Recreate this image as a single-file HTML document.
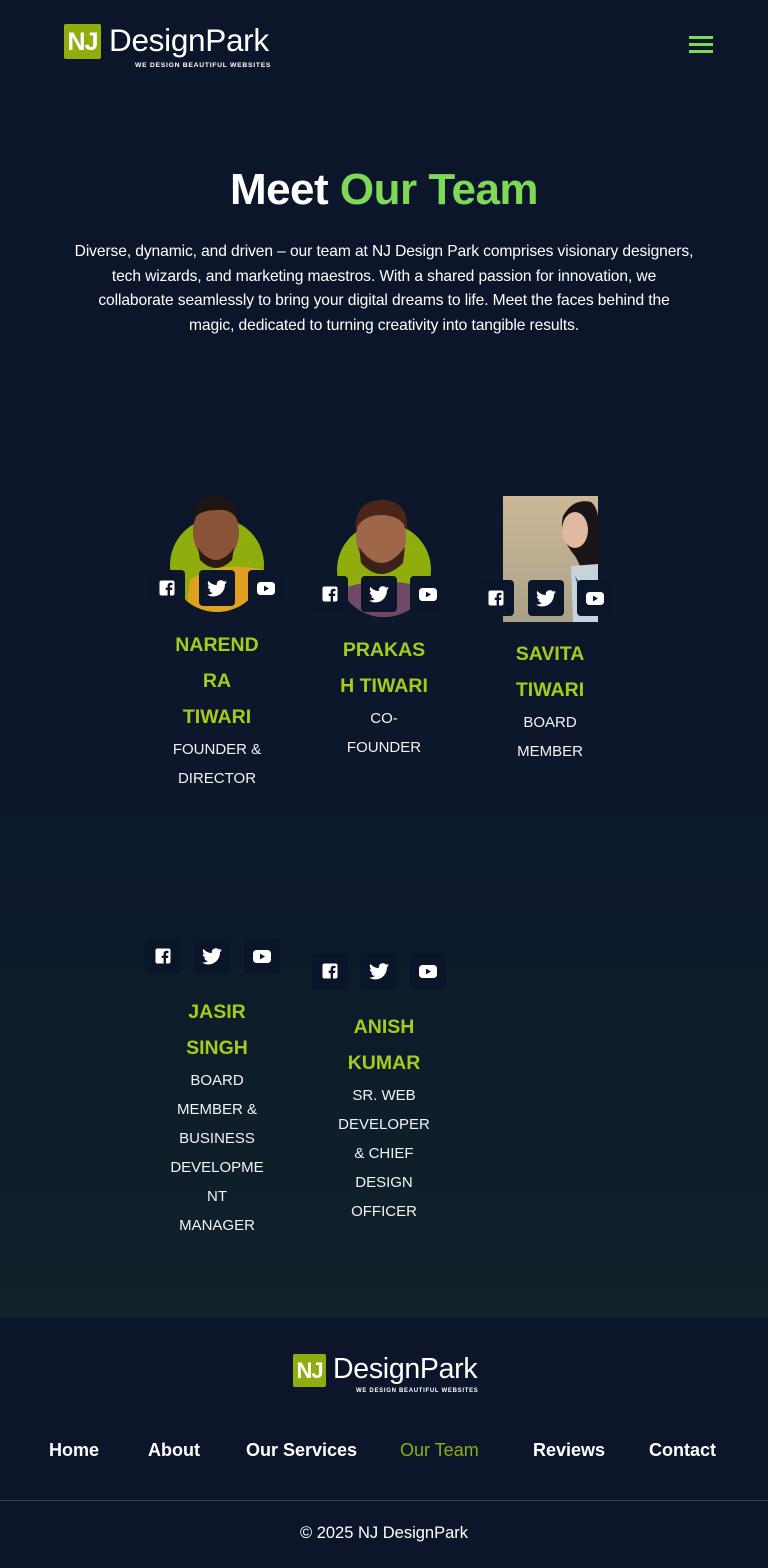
<!DOCTYPE html>
<html><head><meta charset="utf-8"><style>
*{margin:0;padding:0;box-sizing:border-box}
body{width:768px;height:1568px;position:relative;overflow:hidden;font-family:"Liberation Sans",sans-serif;
background:linear-gradient(180deg,#0c162b 0px,#0c172b 800px,#10222a 1318px);color:#fff}
.a{position:absolute}
.tag{position:absolute;color:#fff;font-size:6.8px;letter-spacing:.7px;white-space:nowrap;font-weight:bold}
h1{position:absolute;top:165px;left:0;width:768px;text-align:center;font-size:44px;font-weight:bold;letter-spacing:-0.5px}
h1 span{color:#7ed957}
.p{position:absolute;left:0;width:768px;text-align:center;font-size:15.6px;line-height:24.5px;top:240px;letter-spacing:-0.1px}
.col{position:absolute;width:140px;text-align:center}
.nm{color:#a7cb1b;font-weight:bold;font-size:19.5px;line-height:36px}
.rl{color:#f2f2f2;font-size:15px;line-height:29px}
.ic{position:absolute;width:36px;height:36px;background:#0c162b;border-radius:4px;display:flex;align-items:center;justify-content:center}
.ic2{background:#0b1529}
.nav{position:absolute;top:1440px;font-weight:bold;font-size:18px}
</style></head><body>

<div class="a" style="left:64px;top:24px;width:37px;height:35px;background:#8fae0e;border-radius:2px"></div>
<div class="a" style="left:64px;top:24px;width:37px;height:35px;font-size:25px;font-weight:bold;text-align:center;line-height:36px;letter-spacing:-1px">NJ</div>
<div class="a" style="left:109px;top:21px;font-size:31.5px;line-height:38px;letter-spacing:-0.3px">DesignPark</div>
<div class="tag" style="left:135px;top:62px">WE DESIGN BEAUTIFUL WEBSITES</div>
<div class="a" style="left:689px;top:36px;width:24px;height:2.5px;background:#7ed957"></div>
<div class="a" style="left:689px;top:43px;width:24px;height:2.5px;background:#7ed957"></div>
<div class="a" style="left:689px;top:50px;width:24px;height:2.5px;background:#7ed957"></div>

<h1>Meet <span>Our Team</span></h1>
<div class="p">
<div>Diverse, dynamic, and driven – our team at NJ Design Park comprises visionary designers,</div>
<div>tech wizards, and marketing maestros. With a shared passion for innovation, we</div>
<div>collaborate seamlessly to bring your digital dreams to life. Meet the faces behind the</div>
<div>magic, dedicated to turning creativity into tangible results.</div>
</div>

<svg width="0" height="0" style="position:absolute">
<defs>
<symbol id="fb" viewBox="0 0 16 16"><rect x="0.5" y="0.5" width="15" height="15" rx="2" fill="#fff"/><path d="M11 16V10h2l.4-2.4H11V6.3c0-.7.3-1.2 1.3-1.2h1.2V3c-.4-.1-1.1-.2-1.9-.2-1.8 0-3 1.1-3 3.1v1.7H6.7V10h1.9v6z" fill="#0c162b"/></symbol>
<symbol id="tw" viewBox="0 0 24 20"><path d="M24 2.4c-.9.4-1.8.6-2.8.8 1-.6 1.8-1.6 2.2-2.7-1 .6-2 1-3.1 1.200C19.3.6 18 0 16.6 0c-2.7 0-4.9 2.2-4.9 4.9 0 .4 0 .8.1 1.1C7.7 5.8 4.1 3.900 1.700.9c-.4.7-.7 1.6-.7 2.5 0 1.7.9 3.2 2.2 4.1-.8 0-1.6-.2-2.2-.6v.1c0 2.4 1.7 4.4 3.9 4.8-.4.1-.8.2-1.3.2-.3 0-.6 0-.9-.1.6 2 2.4 3.4 4.6 3.4-1.7 1.3-3.8 2.1-6.1 2.1-.4 0-.8 0-1.2-.1 2.2 1.4 4.8 2.2 7.5 2.2 9.1 0 14-7.5 14-14v-.6c1-.7 1.8-1.6 2.5-2.5z" fill="#fff"/></symbol>
<symbol id="yt" viewBox="0 0 18 13"><rect x="0" y="0" width="18" height="13" rx="3.5" fill="#fff"/><path d="M7 3.6v5.8l5-2.9z" fill="#0c162b"/></symbol>
</defs></svg>

<svg class="a" style="left:150px;top:490px" width="140" height="130">
<defs><clipPath id="c1"><circle cx="67" cy="75" r="47"/></clipPath></defs>
<circle cx="67" cy="75" r="47" fill="#8fae0e"/>
<g clip-path="url(#c1)"><path d="M40 90Q67 70 115 80L115 130L35 130Z" fill="#e0a020"/></g>
<ellipse cx="66" cy="42" rx="23" ry="30" fill="#8a5236"/>
<path d="M42 30Q45 5 66 6Q88 8 90 35Q84 18 66 20Q50 20 42 30z" fill="#1d1512"/>
<path d="M48 58Q66 82 84 58L82 70Q66 86 50 70z" fill="#2a1a14"/>
</svg>
<svg class="a" style="left:317px;top:495px" width="140" height="130">
<defs><clipPath id="c2"><circle cx="67" cy="75" r="47"/></clipPath></defs>
<circle cx="67" cy="75" r="47" fill="#8fae0e"/>
<g clip-path="url(#c2)"><path d="M20 95Q67 78 115 95L115 130L20 130Z" fill="#6e4a68"/></g>
<ellipse cx="64" cy="42" rx="25" ry="32" fill="#a0664a"/>
<path d="M38 35Q38 5 66 5Q92 6 90 35Q84 20 64 20Q46 20 38 35z" fill="#4a2518"/>
<path d="M42 52Q64 84 88 52L86 68Q64 90 44 68z" fill="#3a2216"/>
</svg>
<div class="a" style="left:503px;top:496px;width:95px;height:126px;background:linear-gradient(180deg,#cdb895,#b9ab90 60%,#a8a088)"></div>
<svg class="a" style="left:503px;top:496px" width="95" height="126">
<path d="M60 20Q70 2 88 6Q98 14 95 40L95 126L72 126Q90 90 72 60Q55 40 60 20z" fill="#1b1416"/>
<ellipse cx="72" cy="34" rx="13" ry="18" fill="#e1b9a0"/>
<path d="M68 70L95 68L95 126L70 126Z" fill="#c6d2dc"/>
<path d="M72 80Q85 100 95 90L95 120Q80 110 72 80z" fill="#2f4ea0"/>
</svg>

<div class="ic" style="left:149px;top:570px"><svg width="16" height="16"><use href="#fb"/></svg></div>
<div class="ic" style="left:199px;top:570px"><svg width="20" height="17" viewBox="0 0 24 20"><use href="#tw"/></svg></div>
<div class="ic" style="left:248px;top:570px"><svg width="18" height="13"><use href="#yt"/></svg></div>

<div class="ic" style="left:312px;top:576px"><svg width="16" height="16"><use href="#fb"/></svg></div>
<div class="ic" style="left:361px;top:576px"><svg width="20" height="17" viewBox="0 0 24 20"><use href="#tw"/></svg></div>
<div class="ic" style="left:410px;top:576px"><svg width="18" height="13"><use href="#yt"/></svg></div>

<div class="ic" style="left:478px;top:580px"><svg width="16" height="16"><use href="#fb"/></svg></div>
<div class="ic" style="left:528px;top:580px"><svg width="20" height="17" viewBox="0 0 24 20"><use href="#tw"/></svg></div>
<div class="ic" style="left:577px;top:580px"><svg width="18" height="13"><use href="#yt"/></svg></div>

<div class="col" style="left:147px;top:627px"><div class="nm">NAREND<br>RA<br>TIWARI</div><div class="rl">FOUNDER &amp;<br>DIRECTOR</div></div>
<div class="col" style="left:314px;top:632px"><div class="nm">PRAKAS<br>H TIWARI</div><div class="rl">CO-<br>FOUNDER</div></div>
<div class="col" style="left:480px;top:636px"><div class="nm">SAVITA<br>TIWARI</div><div class="rl">BOARD<br>MEMBER</div></div>

<div class="ic ic2" style="left:145px;top:938px"><svg width="16" height="16"><use href="#fb"/></svg></div>
<div class="ic ic2" style="left:194px;top:938px"><svg width="20" height="17" viewBox="0 0 24 20"><use href="#tw"/></svg></div>
<div class="ic ic2" style="left:244px;top:938px"><svg width="18" height="13"><use href="#yt"/></svg></div>

<div class="ic ic2" style="left:312px;top:953px"><svg width="16" height="16"><use href="#fb"/></svg></div>
<div class="ic ic2" style="left:361px;top:953px"><svg width="20" height="17" viewBox="0 0 24 20"><use href="#tw"/></svg></div>
<div class="ic ic2" style="left:410px;top:953px"><svg width="18" height="13"><use href="#yt"/></svg></div>

<div class="col" style="left:147px;top:994px"><div class="nm">JASIR<br>SINGH</div><div class="rl">BOARD<br>MEMBER &amp;<br>BUSINESS<br>DEVELOPME<br>NT<br>MANAGER</div></div>
<div class="col" style="left:314px;top:1009px"><div class="nm">ANISH<br>KUMAR</div><div class="rl">SR. WEB<br>DEVELOPER<br>&amp; CHIEF<br>DESIGN<br>OFFICER</div></div>

<div class="a" style="left:0;top:1318px;width:768px;height:250px;background:#0c152a"></div>
<div class="a" style="left:293px;top:1354px;width:33px;height:33px;background:#8fae0e;border-radius:2px;font-size:22px;font-weight:bold;text-align:center;line-height:34px;letter-spacing:-1px">NJ</div>
<div class="a" style="left:333px;top:1351px;font-size:28.5px;line-height:36px;letter-spacing:-0.3px">DesignPark</div>
<div class="tag" style="left:356px;top:1388px;font-size:6px">WE DESIGN BEAUTIFUL WEBSITES</div>

<div class="nav" style="left:49px">Home</div>
<div class="nav" style="left:148px">About</div>
<div class="nav" style="left:246px">Our Services</div>
<div class="nav" style="left:400px;color:#8fae0e;font-weight:normal">Our Team</div>
<div class="nav" style="left:533px">Reviews</div>
<div class="nav" style="left:649px">Contact</div>

<div class="a" style="left:0;top:1500px;width:768px;height:1px;background:#3a4256"></div>
<div class="a" style="left:0;top:1524px;width:768px;text-align:center;font-size:16.5px">© 2025 NJ DesignPark</div>
</body></html>
